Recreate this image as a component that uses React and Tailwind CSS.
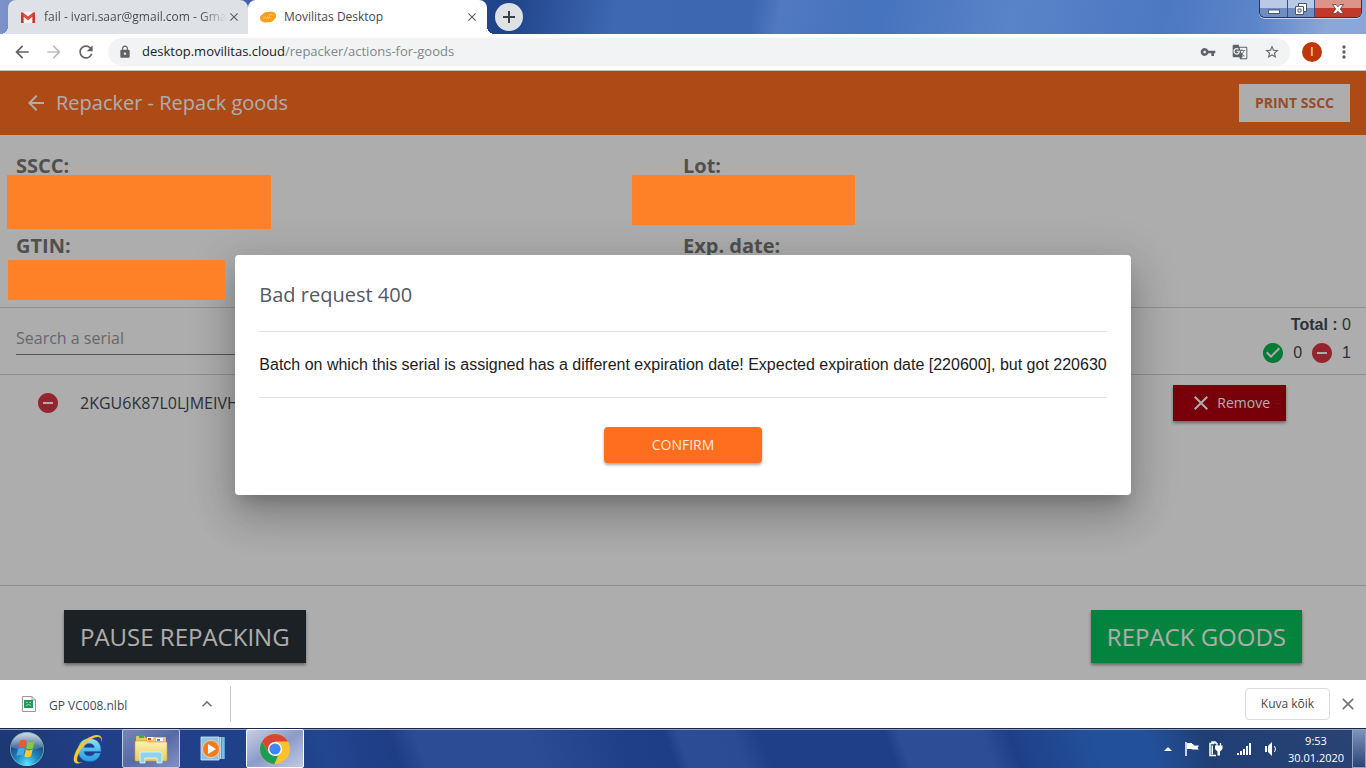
import { useState } from 'react';
import {
  MdArrowBack,
  MdArrowForward,
  MdCheckCircle,
  MdClose,
  MdExpandLess,
  MdGTranslate,
  MdLock,
  MdMoreVert,
  MdRefresh,
  MdRemoveCircle,
  MdStarBorder,
  MdVpnKey,
} from 'react-icons/md';

const GmailIcon = () => (
  <svg viewBox="0 0 16 16" className="size-4 shrink-0">
    <rect x="1" y="3" width="14" height="11" rx="1" fill="#f3f3f3" />
    <path d="M1 14V4.2L8 9.6l7-5.4V14h-2.4V7.6L8 11.2 3.4 7.6V14z" fill="#d23f31" />
    <path d="M1 14V4h2.4v10zM12.6 14V4H15v10z" fill="#c5392b" />
    <path d="M1 4.2Q1 3 2.2 3L8 7.4 13.8 3Q15 3 15 4.2L8 9.8z" fill="#db4437" />
  </svg>
);

const MovilitasIcon = () => (
  <svg viewBox="0 0 16 16" className="size-4 shrink-0">
    <path
      d="M0 9.5C0 7.5 1 6 2.600 5.600 3.600 3.400 6 2.600 8 3.200 10.500 1.800 15 2.400 15.800 5.400c.8 2.200 0 4.200-1.600 4.900-.8 2.200-3.600 3.300-6 2.800C5.800 14.200.600 13.400 0 9.500z"
      fill="#f9a01b"
    />
    <path
      d="M3 9.600c.6-1.800 2.400-2 3-.6s2-.2 1.600-1.800M8.200 9.800c.4-1.600 2.200-1.800 3-.8M9 6.200c1-1 3-1 3.800.4"
      fill="none"
      stroke="#fbd68a"
      strokeWidth=".9"
    />
  </svg>
);

const StartOrb = () => (
  <svg viewBox="0 0 40 40" className="size-[38px]">
    <defs>
      <radialGradient id="orb" cx="50%" cy="92%" r="85%">
        <stop offset="0" stopColor="#5ee6ff" />
        <stop offset=".35" stopColor="#1c8fc6" />
        <stop offset=".7" stopColor="#1d5185" />
        <stop offset="1" stopColor="#4c7aa3" />
      </radialGradient>
      <linearGradient id="orbShine" x1="0" y1="0" x2="0" y2="1">
        <stop offset="0" stopColor="#fff" stopOpacity=".7" />
        <stop offset="1" stopColor="#fff" stopOpacity=".1" />
      </linearGradient>
    </defs>
    <circle cx="20" cy="20" r="18.500" fill="url(#orb)" stroke="#16305c" />
    <circle cx="20" cy="20" r="17.500" fill="none" stroke="#a8cbe6" strokeOpacity=".6" />
    <path d="M3.500 18C4 8 12 3 20 3s16 5 16.500 15c-9 4-24 4-33 0z" fill="url(#orbShine)" />
    <path d="M12.500 11.500c2.500-1.600 4.500-1.400 7-.1l-1.600 7.400c-2.400-1.300-4.500-1.400-7 0z" fill="#ee5a24" />
    <path d="M20.700 12c2.500 1.300 4.600 1.200 7.300-.2l-1.700 7.300c-2.500 1.500-4.700 1.500-7.200.2z" fill="#8cc63f" />
    <path d="M10.600 20c2.500-1.500 4.500-1.300 7-.1l-1.700 7.400c-2.400-1.200-4.500-1.300-7 .1z" fill="#4aa8e8" />
    <path d="M18.800 20.500c2.500 1.300 4.600 1.300 7.200-.2l-1.700 7.300c-2.500 1.500-4.600 1.500-7.200.2z" fill="#fdc92b" />
  </svg>
);

const ExplorerBrowserIcon = () => (
  <svg viewBox="0 0 32 32" className="size-8">
    <defs>
      <linearGradient id="ie" x1="0" y1="0" x2="0" y2="1">
        <stop offset="0" stopColor="#9be4fb" />
        <stop offset=".5" stopColor="#4fbdf0" />
        <stop offset="1" stopColor="#2a9be0" />
      </linearGradient>
    </defs>
    <path
      d="M28.500 20H22.600c-.8 2-2.600 3-5 3-3.200 0-5.300-1.700-5.600-4.600h16.800C29.600 10.500 24.800 5.500 17.600 5.500 10.700 5.500 6 10.300 6 17c0 6.800 4.800 11.500 11.800 11.500 5.400 0 9.400-3 10.700-8.500zM12.100 14.600c.5-2.500 2.500-4 5.300-4s4.700 1.500 5 4z"
      fill="url(#ie)"
      stroke="#1b6fc0"
      strokeWidth=".5"
    />
    <path
      d="M29.500 9.500C31 5 29 1.500 24 2 18 2.600 9 8.500 4.500 17 .8 24.500.6 30 5 30.500c1.800.2 4-.6 6-1.800-2.600 1-4.700 1-5.500-.4-1.300-2.200.6-8 5-14C15.800 7.300 22.200 3.700 26 4c3 .2 3.800 2.500 3.500 5.500z"
      fill="#f7c531"
    />
  </svg>
);

const FolderIcon = () => (
  <svg viewBox="0 0 34 30" className="h-[30px] w-[34px]">
    <defs>
      <linearGradient id="folder" x1="0" y1="0" x2="0" y2="1">
        <stop offset="0" stopColor="#fdf3b5" />
        <stop offset="1" stopColor="#ecc95c" />
      </linearGradient>
    </defs>
    <path d="M2 7V3q0-1 1-1h7l2 2h3l2-1h14q1 0 1 1v6H2z" fill="#e9c75c" />
    <path d="M5 1h5v3H5z" fill="#3fae49" />
    <path d="M13 3h6v3h-6z" fill="#fff" />
    <path d="M14 4h3v2h-3z" fill="#d9412e" />
    <path d="M22 4h7v3h-7z" fill="#fff" />
    <path d="M23 5h3v2h-3z" fill="#3c8fd6" />
    <path d="M1 8q0-1 1-1h10l2 1h18q1 0 1 1v17q0 1-1 1H2q-1 0-1-1z" fill="url(#folder)" stroke="#c9a23c" strokeWidth=".6" />
    <path d="M6 29V20q0-2 2-2h18q2 0 2 2v9h-5v-5H11v5z" fill="#8fd4ef" stroke="#e6f8ff" strokeWidth=".8" />
  </svg>
);

const MediaPlayerIcon = () => (
  <svg viewBox="0 0 28 28" className="size-7">
    <path d="M10 2h16v22H10z" fill="#4f9ed0" />
    <path d="M24 2v22M21.500 2v22" stroke="#b7def2" strokeWidth=".9" />
    <path d="M2 2h18v23H2z" fill="#8dc3e4" stroke="#d6eefa" strokeWidth=".8" />
    <circle cx="12" cy="14" r="8.500" fill="#f07c22" stroke="#fbd0a4" strokeWidth=".9" />
    <path d="M9 9l8 5-8 5z" fill="#fff" />
  </svg>
);

const ChromeIcon = () => (
  <svg viewBox="0 0 32 32" className="size-8">
    <circle cx="16" cy="16" r="15" fill="#fbc22e" />
    <path d="M16 16 9.900 19.500 3 8.500A15 15 0 0 1 29 8.500H16z" fill="#dc4437" />
    <path d="M3 8.500 9.700 19.700 16 23l3-.4L15.500 31A15 15 0 0 1 3 8.500z" fill="#1b9c57" />
    <circle cx="16" cy="16" r="7" fill="#fff" />
    <circle cx="16" cy="16" r="5.600" fill="#4285f4" />
  </svg>
);

const FileIcon = () => (
  <svg viewBox="0 0 14 16" className="h-4 w-[14px]">
    <path d="M.5.500h9.500l3.500 3.500v11.500H.5z" fill="#fff" stroke="#9a9a9a" />
    <path d="M10 .5V4h3.500" fill="none" stroke="#9a9a9a" />
    <path d="M2 4h9v8H2z" fill="#1f9d57" />
    <path d="M4 6.500h1.500M7.500 6.500H9M4 9.500q2.500-2 5 0" stroke="#9bd8b5" fill="none" />
  </svg>
);

const TrayIcons = () => (
  <div className="flex items-center gap-2 text-white">
    <button aria-label="Show hidden icons" className="flex size-4 items-center justify-center">
      <svg viewBox="0 0 8 4" className="h-1 w-2"><path d="M0 4 4 0l4 4z" fill="#fff" /></svg>
    </button>
    <button aria-label="Action center">
      <svg viewBox="0 0 16 16" className="size-4">
        <path d="M2 1v14" stroke="#fff" strokeWidth="1.500" />
        <path d="M3 2h5v1h1l1 1.500h5L13.500 7 15 8.500H8.500L7.500 8H3z" fill="#fff" />
      </svg>
    </button>
    <button aria-label="Power">
      <svg viewBox="0 0 16 16" className="size-4">
        <path d="M4 2V1h3v1h2M8 14.500H2v-12h4" fill="none" stroke="#fff" strokeWidth="1.500" />
        <path d="M3.500 4.500h1.500v9H3.500z" fill="#fff" />
        <path d="M9 2v3M12.500 2v3" stroke="#fff" strokeWidth="1.300" />
        <path d="M7 4.500h7.500V8L12 10.500v4H9.500v-4L7 8z" fill="#fff" />
      </svg>
    </button>
    <button aria-label="Network" className="ml-1">
      <svg viewBox="0 0 16 16" className="size-4">
        <path d="M1 12h2v2H1zM4 10h2v4H4zM7 8h2v6H7zM10 5h2v9h-2zM13 2h2v12h-2z" fill="#fff" />
      </svg>
    </button>
    <button aria-label="Volume" className="ml-1">
      <svg viewBox="0 0 16 16" className="size-4">
        <path d="M1 5h2v6H1zM4 5l4-4v14l-4-4z" fill="#fff" />
        <path d="M10.500 5q2 3 0 6" fill="none" stroke="#fff" />
      </svg>
    </button>
  </div>
);

const TabStrip = () => (
  <div className="flex h-[34px] shrink-0 bg-[linear-gradient(100deg,#7d92c8_0%,#3a5ba4_20%,#1f4389_37%,#3e68b2_45%,#3d67b1_55%,#5079c1_57%,#4673bd_64%,#5a84c9_74%,#4c78c2_85%,#5d85c9_92%,#8ba6d8_97%)] pl-2">
    <div className="relative flex w-[240px] items-center rounded-t-lg bg-[#dee1e6] pr-2 pl-3">
      <span className="absolute bottom-0 -left-2 size-2 bg-[radial-gradient(circle_at_top_left,transparent_8px,#dee1e6_8px)]" />
      <GmailIcon />
      <span className="ml-2 flex-1 bg-linear-to-r from-[#45494d] from-85% to-[#dee1e6] bg-clip-text text-xs whitespace-nowrap text-transparent">
        fail - ivari.saar@gmail.com - Gma
      </span>
      <button aria-label="Close tab" className="text-[#5f6368]">
        <MdClose className="size-[14px]" />
      </button>
    </div>
    <div className="relative flex w-[239px] items-center rounded-t-lg bg-white pr-2 pl-3">
      <MovilitasIcon />
      <span className="ml-2 flex-1 text-xs whitespace-nowrap text-[#45494d]">Movilitas Desktop</span>
      <button aria-label="Close tab" className="text-[#5f6368]">
        <MdClose className="size-[14px]" />
      </button>
      <span className="absolute -right-2 bottom-0 size-2 bg-[radial-gradient(circle_at_top_right,transparent_8px,white_8px)]" />
    </div>
    <button aria-label="New tab" className="mt-[3px] ml-2 flex size-7 items-center justify-center rounded-full bg-[#dee1e6]">
      <svg viewBox="0 0 12 12" className="size-3"><path d="M6 0v12M0 6h12" stroke="#3c4043" strokeWidth="2" /></svg>
    </button>
    <div className="mr-1 ml-auto flex h-[18px] overflow-hidden rounded-b-md border border-t-0 border-[#26365c] shadow-[0_1px_0_#c9d6ee]">
      <button aria-label="Minimize" className="flex w-7 items-center justify-center border-r border-[#3a4d7a] bg-linear-to-b from-[#b9c9e6] from-50% to-[#6f8dc0] to-50%">
        <svg viewBox="0 0 12 10" className="h-[10px] w-3"><rect x=".5" y="6" width="11" height="3.500" fill="#fff" stroke="#4a5670" /></svg>
      </button>
      <button aria-label="Restore" className="flex w-[27px] items-center justify-center border-r border-[#3a4d7a] bg-linear-to-b from-[#b9c9e6] from-50% to-[#6f8dc0] to-50%">
        <svg viewBox="0 0 12 12" className="size-3">
          <path d="M3.500.500h8v8h-3v3h-8v-8h3z" fill="#fff" stroke="#4a5670" />
          <path d="M3.500 3.500h5v5M3 6h3v3H3z" fill="none" stroke="#4a5670" />
        </svg>
      </button>
      <button aria-label="Close window" className="flex w-[46px] items-center justify-center bg-linear-to-b from-[#dd9488] from-50% to-[#c0392b] to-50%">
        <svg viewBox="0 0 12 10" className="h-[10px] w-3">
          <path d="M.5.500h3.500L6 2.800 8 .5h3.500L8.300 5l3.200 4.500H8L6 7.200 4 9.500H.5L3.700 5z" fill="#fff" stroke="#5a4048" strokeWidth=".8" />
        </svg>
      </button>
    </div>
  </div>
);

const Toolbar = () => (
  <div className="flex h-[37px] shrink-0 items-center border-b border-[#c9bfb6] bg-white px-3 text-[#5f6368]">
    <button aria-label="Back"><MdArrowBack className="size-5" /></button>
    <button aria-label="Forward" className="ml-3 text-[#babcbe]"><MdArrowForward className="size-5" /></button>
    <button aria-label="Reload" className="ml-3"><MdRefresh className="size-5" /></button>
    <div className="ml-3 flex h-7 flex-1 items-center rounded-full bg-[#f1f3f4] px-2.5">
      <MdLock className="size-[14px]" />
      <p className="ml-2.5 flex-1 text-[13px] whitespace-nowrap text-[#80868b]">
        <span className="text-[#202124]">desktop.movilitas.cloud</span>/repacker/actions-for-goods
      </p>
      <button aria-label="Passwords"><MdVpnKey className="size-4" /></button>
      <button aria-label="Translate" className="ml-4"><MdGTranslate className="size-4" /></button>
      <button aria-label="Bookmark" className="ml-4"><MdStarBorder className="size-4" /></button>
    </div>
    <button aria-label="Profile" className="ml-3 size-5 rounded-full bg-[#bf360c] text-xs leading-5 text-white">I</button>
    <button aria-label="Menu" className="ml-3"><MdMoreVert className="size-5" /></button>
  </div>
);

const details = [
  { label: 'SSCC:', cover: 'top-7 -left-[9px] h-[54px] w-[264px]' },
  { label: 'Lot:', cover: 'top-7 -left-[51px] h-[50px] w-[223px]' },
  { label: 'GTIN:', cover: 'top-[33px] -left-2 h-10 w-[217px]' },
  { label: 'Exp. date:' },
];

const ErrorDialog = ({ onConfirm }) => (
  <div className="absolute inset-0 z-10 flex items-center justify-center bg-black/32 pb-0.5">
    <div
      role="dialog"
      aria-labelledby="dialog-title"
      className="rounded-sm bg-white px-6 pb-8 shadow-[0_11px_15px_-7px_rgba(0,0,0,0.2),0_24px_38px_3px_rgba(0,0,0,0.14),0_9px_46px_8px_rgba(0,0,0,0.12)]"
    >
      <h2 id="dialog-title" className="border-b border-[#e0e0e0] pt-6 pb-5 text-xl leading-8 text-[#54595f]">
        Bad request 400
      </h2>
      <p className="border-b border-[#e0e0e0] py-5 font-['Liberation_Sans',sans-serif] text-base leading-[25px] text-[#212121]">
        Batch on which this serial is assigned has a different expiration date! Expected expiration date [220600], but got 220630
      </p>
      <div className="mt-[29px] flex justify-center">
        <button
          onClick={onConfirm}
          className="h-9 w-[158px] rounded-sm bg-[#ff6d1f] text-sm font-medium text-[#ffe9dc] shadow-[0_2px_3px_rgba(0,0,0,0.35)]"
        >
          CONFIRM
        </button>
      </div>
    </div>
  </div>
);

const Repacker = () => {
  const [isDialogOpen, setIsDialogOpen] = useState(true);

  return (
    <main className="relative flex flex-1 flex-col overflow-hidden bg-white text-[#424b54]">
      <header className="flex h-16 shrink-0 items-center bg-[#ff6d1f] px-4 text-white">
        <button aria-label="Back" className="ml-2"><MdArrowBack className="size-6" /></button>
        <h1 className="ml-2 text-xl">Repacker - Repack goods</h1>
        <button className="ml-auto h-[38px] bg-white px-4 text-sm font-bold text-[#e2703a]">PRINT SSCC</button>
      </header>

      <section className="grid shrink-0 grid-cols-2 border-b border-[#d4d4d4] px-4 pt-3">
        {details.map((item) => (
          <div key={item.label} className="relative h-20">
            <span className="text-xl leading-[38px] font-bold text-[#777]">{item.label}</span>
            {item.cover && <div className={`absolute z-20 bg-[#ff8127] ${item.cover}`} />}
          </div>
        ))}
      </section>

      <section className="flex h-[67px] shrink-0 items-center justify-between border-b border-[#d4d4d4] pr-[15px] pb-[5px] pl-4">
        <input
          aria-label="Search a serial"
          placeholder="Search a serial"
          className="h-8 w-1/2 border-b border-[#808080] text-base outline-none placeholder:text-[#999]"
        />
        <div className="flex flex-col items-end font-['Liberation_Sans',sans-serif] text-base leading-7">
          <p><b>Total :</b> 0</p>
          <p className="flex items-center">
            <MdCheckCircle className="size-6 text-[#05b552]" />
            <span className="ml-2">0</span>
            <MdRemoveCircle className="ml-2 size-6 text-[#dc3545]" />
            <span className="ml-2">1</span>
          </p>
        </div>
      </section>

      <ul className="flex-1 overflow-hidden">
        <li className="flex items-center py-2.5 pr-20 pl-9">
          <MdRemoveCircle className="size-6 text-[#dc3545]" />
          <span className="ml-5 text-base">2KGU6K87L0LJMEIVH</span>
          <button className="ml-auto flex h-9 items-center bg-[#b00010] px-4 text-sm font-medium text-white shadow-[0_2px_3px_rgba(0,0,0,0.4)]">
            <MdClose className="mr-1 size-6" />
            Remove
          </button>
        </li>
      </ul>

      <footer className="flex shrink-0 justify-between border-t border-[#d4d4d4] px-16 pt-6 pb-[17px] text-2xl text-white">
        <button className="h-[53px] bg-[#293236] px-4 shadow-[0_2px_3px_rgba(0,0,0,0.4)]">PAUSE REPACKING</button>
        <button className="h-[53px] bg-[#05c25a] px-4 shadow-[0_2px_3px_rgba(0,0,0,0.4)]">REPACK GOODS</button>
      </footer>

      {isDialogOpen && <ErrorDialog onConfirm={() => setIsDialogOpen(false)} />}
    </main>
  );
};

const DownloadShelf = () => (
  <div className="flex h-12 shrink-0 items-center bg-white pr-2 pl-[22px] text-[#45494d]">
    <FileIcon />
    <span className="ml-[13px] w-[148px] pt-1 text-xs">GP VC008.nlbl</span>
    <button aria-label="Download options"><MdExpandLess className="size-5 text-[#6f7377]" /></button>
    <div className="ml-[13px] h-9 border-l border-[#c8cacc]" />
    <button className="mr-2 ml-auto h-8 w-[85px] rounded border border-[#dadce0] text-xs font-medium">Kuva kõik</button>
    <button aria-label="Close downloads"><MdClose className="size-5 text-[#6f7377]" /></button>
  </div>
);

const Taskbar = () => (
  <div className="flex h-10 shrink-0 border-t border-[#1b2746] bg-[linear-gradient(70deg,#1c3872_0%,#213f88_8%,#20418b_22%,#234690_24%,#1e3d85_29%,#2c4c95_31%,#2c4d96_39%,#1f4088_46%,#1d3e86_49%,#2c4d96_50%,#2b4b94_54%,#1f4089_56%,#1f4088_65%,#2b4e97_66%,#2b4e97_72%,#1f4089_74%,#23509a_80%,#23509a_84%,#203f75_88%,#2a4473_100%)] text-white shadow-[inset_0_1px_0_#8c9cc6]">
    <button aria-label="Start" className="ml-2 flex items-center"><StartOrb /></button>
    <button aria-label="Internet Explorer" className="ml-[18px] flex w-[58px] items-center pl-2"><ExplorerBrowserIcon /></button>
    <button aria-label="Windows Explorer" className="flex w-[58px] items-center justify-center rounded-xs border border-[#c3cce4] bg-linear-to-br from-[#7886b8] via-[#566aa5] to-[#8391c0]">
      <FolderIcon />
    </button>
    <button aria-label="Media Player" className="flex w-[66px] items-center justify-center"><MediaPlayerIcon /></button>
    <button aria-label="Google Chrome" className="flex w-[58px] items-center justify-center rounded-xs border border-white bg-linear-to-br from-[#c9d0e6] via-[#8c9bc8] to-[#c3cbe3]">
      <ChromeIcon />
    </button>
    <div className="ml-auto flex items-center">
      <TrayIcons />
      <div className="mx-2 w-14 text-center text-[11px] leading-[17px] whitespace-nowrap">
        <p>9:53</p>
        <p>30.01.2020</p>
      </div>
      <button aria-label="Show desktop" className="h-full w-[14px] border border-[#93a4c8] bg-linear-to-b from-[#8193bb] to-[#2a4577]" />
    </div>
  </div>
);

const App = () => (
  <div className="flex h-screen flex-col overflow-hidden font-['Open_Sans',sans-serif]">
    <TabStrip />
    <Toolbar />
    <Repacker />
    <DownloadShelf />
    <Taskbar />
  </div>
);

export default App;
